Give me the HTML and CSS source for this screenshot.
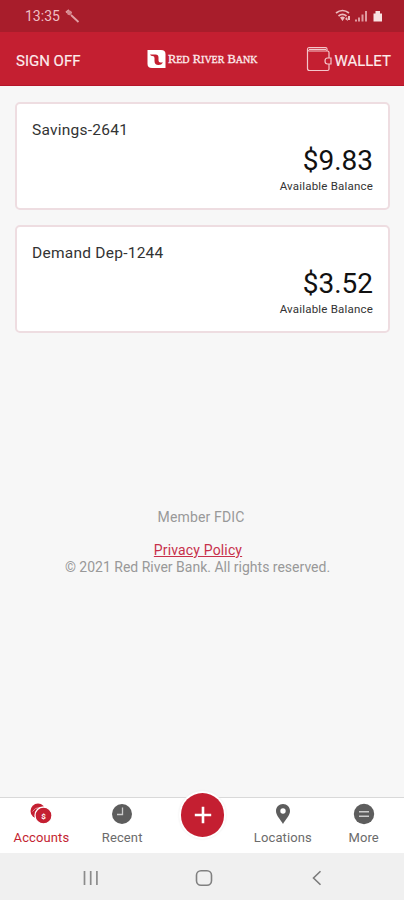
FILE: index.html
```
<!DOCTYPE html>
<html lang="en">
  <head>
    <meta charset="UTF-8"/>
    <meta name="viewport" content="width=device-width"/>
    <title>Red River Bank</title>
    <link rel="stylesheet" href="styles.css">
  </head>
  <body>
    <div class="statusbar">
      <span class="time">13:35</span>
      <svg class="wrench" width="15" height="15" viewBox="0 0 15 15">
        <path d="M1 3.5 4 1M3.5 5.5 6.5 3M6 6l7.5 7" fill="none" stroke="#e2a0a5" stroke-width="1.800"/>
        <circle cx="4.3" cy="3.8" r="2.4" fill="#d5868d"/>
      </svg>
      <svg class="signals" width="50" height="14" viewBox="0 0 50 14">
        <g fill="none" stroke="#edbcbf" stroke-width="1.7">
          <path d="M1 4q6.500-5 13 0M3.500 7q4-3.300 8 0"/>
        </g>
        <path d="M5 8.500q2.500-1.800 5 0L7.500 12zM10 10l2-2 1 4zM13 7l2 0v4h-2z" fill="#edbcbf"/>
        <path d="M20 10.500h2v2h-2zM23 8.500h2v4h-2zM26.500 5.500h2v7h-2zM30 2h2v10.500h-2z" fill="#df9aa0"/>
        <path d="M38.500 4.500h2V2H45v2.500h2v8h-8.500z" fill="#f8e2e2"/>
      </svg>
    </div>
    <div class="header">
      <span class="signoff">SIGN OFF</span>
      <div class="logo">
        <svg width="19" height="20" viewBox="0 0 19 20">
          <path d="M.5 1H14q4.500 0 4.500 4v14H5q-4.500 0-4.500-4z" fill="#fff"/>
          <path d="M3 5.500h5.500q3 0 3 3v3q0 2 2 2h2.500q-1.500 2.500-4.500 2.500-4 0-4-4v-3q0-2-2-2-1.700 0-2.500-1.500z" fill="#c41f31"/>
        </svg>
        <span class="brand">R<small>ED</small> R<small>IVER</small> B<small>ANK</small></span>
      </div>
      <div class="wallet">
        <svg width="26" height="26" viewBox="0 0 26 26">
          <g fill="none" stroke="#f4c6ca" stroke-width="1.200">
            <path d="M1.500 3.500v19q0 2 2 2h18q1.500 0 1.500-1.500v-5M23 12V6.500q0-1.500-1.500-1.500H3q-1.500 0-1.500-1.700T3 1.500h16.500q1.500 0 1.500 1.500v2M3 3.300h17"/>
            <path d="M25 12h-3.500q-2.500 0-2.500 3t2.500 3H25z"/>
          </g>
        </svg>
        <span>WALLET</span>
      </div>
    </div>
    <div class="content">
      <div class="card">
        <p class="account">Savings-2641</p>
        <p class="amount">$9.83</p>
        <p class="available">Available Balance</p>
      </div>
      <div class="card">
        <p class="account">Demand Dep-1244</p>
        <p class="amount">$3.52</p>
        <p class="available">Available Balance</p>
      </div>
      <div class="legal">
        <p class="fdic">Member FDIC</p>
        <p class="privacy"><a href="#">Privacy Policy</a></p>
        <p class="copyright">© 2021 Red River Bank. All rights reserved.</p>
      </div>
    </div>
    <div class="tabs">
      <div class="tab active">
        <svg width="24" height="22" viewBox="0 0 24 22">
          <circle cx="9" cy="8" r="7.500" fill="#c41f31"/>
          <path d="M3.500 8.500Q5.500 4.500 11 4.500" fill="none" stroke="#e58d97" stroke-width="1"/>
          <circle cx="14.500" cy="12.500" r="8.500" fill="#c41f31" stroke="#fff" stroke-width="1.300"/>
          <text x="14.500" y="15.500" class="dollar">$</text>
        </svg>
        <span>Accounts</span>
      </div>
      <div class="tab recent">
        <svg width="22" height="22" viewBox="0 0 22 22">
          <circle cx="11" cy="11" r="10" fill="#5d5d5d"/>
          <path d="M11.500 4.500v7H6" fill="none" stroke="#ccc" stroke-width="1.300"/>
        </svg>
        <span>Recent</span>
      </div>
      <div class="add">
        <svg width="18" height="18" viewBox="0 0 18 18">
          <path d="M9 .8v16.400M.8 9h16.400" stroke="#fff" stroke-width="2.600"/>
        </svg>
      </div>
      <div class="tab locations">
        <svg width="22" height="22" viewBox="0 0 22 22">
          <path d="M11 1C7 1 4 3.900 4 8c0 4.500 4.500 8.500 7 13 2.500-4.500 7-8.500 7-13 0-4.100-3-7-7-7z" fill="#5d5d5d"/>
          <circle cx="11" cy="8" r="2.700" fill="#fff"/>
        </svg>
        <span>Locations</span>
      </div>
      <div class="tab more">
        <svg width="22" height="22" viewBox="0 0 22 22">
          <circle cx="11" cy="11" r="10.200" fill="#5d5d5d"/>
          <path d="M6 8.700h10M6 13.300h10" stroke="#ccc" stroke-width="1.500"/>
        </svg>
        <span>More</span>
      </div>
    </div>
    <div class="navbar">
      <svg width="18" height="18" viewBox="0 0 18 18">
        <path d="M2.500 2v14M8.700 2v14M14.900 2v14" stroke="#8b8b8b" stroke-width="1.700"/>
      </svg>
      <svg width="18" height="18" viewBox="0 0 18 18">
        <rect x="1.500" y="1.800" width="15" height="14.400" rx="4.500" fill="none" stroke="#808080" stroke-width="1.600"/>
      </svg>
      <svg width="18" height="18" viewBox="0 0 18 18">
        <path d="M12.500 2.200 5.500 9l7 6.800" fill="none" stroke="#7b7b7b" stroke-width="1.600"/>
      </svg>
    </div>
  </body>
</html>
```
FILE: styles.css
```
* {
  box-sizing: border-box;
}

body {
  margin: 0;
  height: 900px;
  display: flex;
  flex-direction: column;
  background-color: #f7f7f7;
  font-family: Roboto, "Liberation Sans", sans-serif;
}

p {
  margin: 0;
}

.statusbar {
  height: 32px;
  background-color: #a81d2b;
  color: #efbfc3;
  display: flex;
  align-items: center;
  padding: 0 19px 0 25px;
  font-size: 14px;
}

.wrench {
  margin-left: 5px;
}

.signals {
  margin-left: auto;
}

.header {
  height: 54px;
  background-color: #c41f31;
  color: #fdeced;
  border-bottom: 1px solid #b5152a;
  display: flex;
  align-items: center;
  justify-content: space-between;
  padding: 0 13px 0 16px;
  font-size: 15px;
  -webkit-text-stroke: 0.15px #fdeced;
}

.signoff {
  width: 82px;
  padding-top: 5px;
}

.logo {
  display: flex;
  align-items: center;
  gap: 2px;
}

.brand {
  padding-top: 2px;
  font-family: "Liberation Serif", serif;
  font-size: 12.5px;
  white-space: nowrap;
  -webkit-text-stroke: 0.3px #fdeced;
}

.brand small {
  font-size: 10px;
}

.wallet {
  display: flex;
  align-items: center;
  gap: 2px;
}

.wallet span {
  padding-top: 5px;
}

.content {
  flex: 1;
  padding: 16px 14px 0 15px;
}

.card {
  height: 108px;
  margin-bottom: 15px;
  padding: 16px 15px 0;
  background-color: #fff;
  border: 2px solid #eedde1;
  border-radius: 5px;
  color: #333;
}

.account {
  font-size: 15.5px;
  line-height: 20px;
  letter-spacing: 0.25px;
}

.amount {
  margin-top: 4px;
  font-size: 28px;
  line-height: 34px;
  text-align: right;
  color: #111;
}

.available {
  font-size: 11.5px;
  line-height: 17px;
  letter-spacing: 0.2px;
  text-align: right;
}

.legal {
  margin-top: 176px;
  font-size: 14px;
  line-height: 17px;
  text-align: center;
  color: #999;
}

.fdic {
  padding-right: 3px;
  letter-spacing: 0.15px;
}

.privacy {
  margin-top: 16px;
  padding-right: 9px;
  letter-spacing: 0.15px;
}

.privacy a {
  color: #c7304b;
}

.copyright {
  padding-right: 10px;
}

.tabs {
  height: 56px;
  background-color: #fff;
  border-top: 1px solid #d9d9d9;
  display: flex;
  justify-content: center;
  padding-left: 1px;
  color: #6b6b6b;
  font-size: 13px;
}

.tab {
  width: 81px;
  display: flex;
  flex-direction: column;
  align-items: center;
  padding-top: 5px;
}

.tab span {
  margin-top: 5px;
  line-height: 16px;
  letter-spacing: 0.1px;
}

.active {
  color: #c41f31;
}

.dollar {
  font-size: 8px;
  font-weight: bold;
  fill: #fff;
  text-anchor: middle;
}

.add {
  width: 44px;
  height: 44px;
  margin: -5px 18px 0;
  border-radius: 50%;
  background-color: #c41f31;
  box-shadow: 0 0 0 2px #fff, 0 0 2px 2px #e8e8e8;
  display: flex;
  align-items: center;
  justify-content: center;
}

.navbar {
  height: 47px;
  background-color: #f0f0f0;
  display: flex;
  align-items: center;
  justify-content: center;
  gap: 95px;
  padding: 3px 0 0 3px;
}
```
